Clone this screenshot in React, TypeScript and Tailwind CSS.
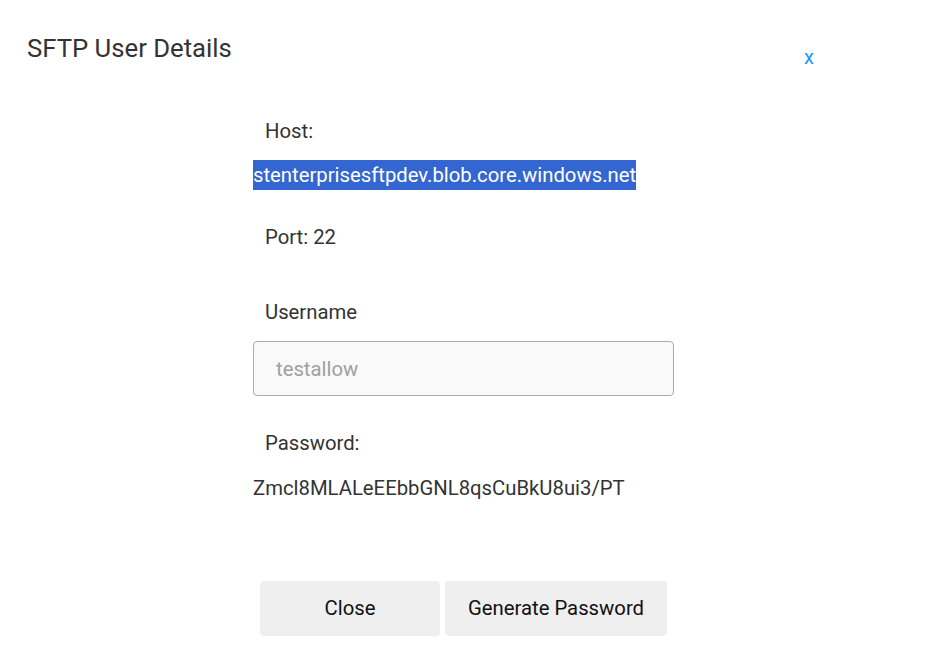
import React from "react";

export default function App() {
  return (
    <div className="w-[928px] h-[667px] bg-white text-[#333] overflow-hidden" style={{ fontFamily: "Roboto, 'Noto Sans', sans-serif" }}>
      {/* Header */}
      <div className="flex justify-between items-start pt-[34px] pl-[27px] pr-[114px]">
        <h2 className="text-[25.7px] leading-[28px] font-normal text-[#333]">SFTP User Details</h2>
        <button className="mt-[11px] text-[20px] leading-[24px] text-[#2196f3] cursor-pointer">x</button>
      </div>

      {/* Body */}
      <div className="ml-[253px] w-[421px] flex flex-col text-[20.3px]">
        <div className="mt-[50px] pl-[12px] leading-[24px]">Host:</div>
        <div className="mt-[17px] w-fit h-[30px] leading-[30px] bg-[#3366d0] text-white">
          stenterprisesftpdev.blob.core.windows.net
        </div>
        <div className="mt-[35px] pl-[12px] leading-[24px]">Port: 22</div>

        <div className="mt-[51px] pl-[12px] leading-[24px]">Username</div>
        <input
          className="mt-[17px] h-[55px] w-full rounded-[4px] border border-[#ababab] bg-[#f9f9f9] pl-[22px] text-[20.3px] text-[#333] placeholder:text-[#a0a0a0] outline-none"
          placeholder="testallow"
          readOnly
        />

        <div className="mt-[35px] pl-[12px] leading-[24px]">Password:</div>
        <div className="mt-[21px] leading-[24px]">Zmcl8MLALeEEbbGNL8qsCuBkU8ui3/PT</div>

        <div className="mt-[81px] flex justify-center gap-[5px]">
          <button className="w-[180px] h-[55px] rounded-[4px] bg-[#efefef] text-[20.3px] text-[#111]">Close</button>
          <button className="w-[222px] h-[55px] rounded-[4px] bg-[#efefef] text-[20.3px] text-[#111]">Generate Password</button>
        </div>
      </div>
    </div>
  );
}
